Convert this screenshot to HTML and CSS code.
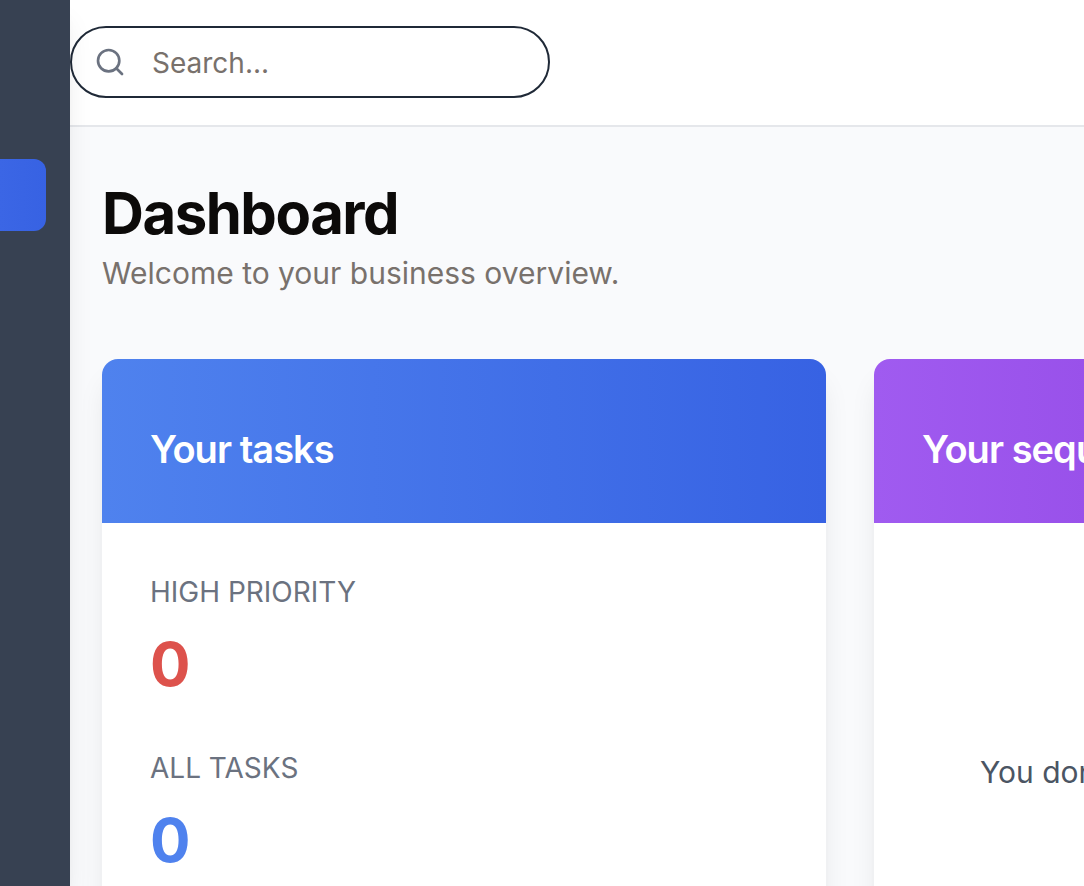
FILE: index.html
```html
<!DOCTYPE html>
<html lang="en">
<head>
<meta charset="utf-8">
<title>Dashboard</title>
<link rel="stylesheet" href="styles.css">
</head>
<body>
<div class="app">
  <nav class="sidebar" aria-label="Main">
    <a class="nav-item" href="#dashboard" aria-label="Dashboard" aria-current="page"></a>
  </nav>
  <div class="main">
    <header class="topbar">
      <label class="search">
        <svg class="search-icon" viewBox="0 0 24 24" aria-hidden="true"><circle cx="11" cy="11" r="8"/><path d="m21 21-4.3-4.3"/></svg>
        <input class="search-input" type="text" placeholder="Search..." aria-label="Search">
      </label>
    </header>
    <main class="content">
      <h1 class="title">Dashboard</h1>
      <p class="subtitle">Welcome to your business overview.</p>
      <div class="cards">
        <section class="card">
          <h2 class="card-head blue">Your tasks</h2>
          <dl class="stats">
            <div class="stat"><dt class="stat-label">HIGH PRIORITY</dt><dd class="stat-value high">0</dd></div>
            <div class="stat"><dt class="stat-label">ALL TASKS</dt><dd class="stat-value all">0</dd></div>
          </dl>
        </section>
        <section class="card">
          <h2 class="card-head purple">Your sequences</h2>
          <p class="empty">You don't have any</p>
        </section>
      </div>
    </main>
  </div>
</div>
</body>
</html>
```
FILE: styles.css
```css
* { box-sizing: border-box; }
body {
  margin: 0;
  font-family: Inter, "Liberation Sans", sans-serif;
  background: #f9fafc;
  overflow: hidden;
}
h1, h2, p, dl, dd { margin: 0; }
.app { display: flex; height: 100vh; }
.sidebar {
  flex: 0 0 70px;
  padding: 159px 24px 0 0;
  background: #374152;
  box-shadow: 0 20px 30px -6px rgba(0, 0, 0, 0.1), 0 8px 12px -8px rgba(0, 0, 0, 0.1);
  z-index: 1;
}
.nav-item {
  display: block;
  height: 72px;
  border-radius: 0 12px 12px 0;
  background: linear-gradient(90deg, #3b66e5, #3762e3);
}
.main { flex: 1; min-width: 0; overflow: hidden; }
.topbar {
  padding: 26px 0 27px;
  background: #fff;
  border-bottom: 2px solid #e5e7eb;
}
.search {
  display: flex;
  align-items: center;
  gap: 26px;
  width: 480px;
  max-width: 100%;
  height: 72px;
  padding: 0 24px 0 22px;
  border: 2px solid #1f2937;
  border-radius: 36px;
  background: #fff;
}
.search-icon {
  flex: none;
  width: 32px;
  height: 32px;
  fill: none;
  stroke: #6b7280;
  stroke-width: 2;
  stroke-linecap: round;
}
.search-input {
  flex: 1;
  min-width: 0;
  padding: 2px 0 0;
  border: 0;
  outline: 0;
  background: transparent;
  font: 28px/40px Inter, "Liberation Sans", sans-serif;
}
.search-input::placeholder { color: #78716c; opacity: 1; }
.content { padding: 50px 32px 0; }
.title {
  color: #0c0a09;
  font-size: 58px;
  line-height: 72px;
  font-weight: 700;
  letter-spacing: -0.025em;
}
.subtitle {
  color: #78716c;
  font-size: 30px;
  line-height: 48px;
}
.cards {
  display: grid;
  grid-template-columns: repeat(2, minmax(724px, 1fr));
  gap: 48px;
  margin-top: 62px;
}
.card {
  min-height: 640px;
  border-radius: 16px;
  background: #fff;
  box-shadow: 0 20px 30px -6px rgba(0, 0, 0, 0.1), 0 8px 12px -8px rgba(0, 0, 0, 0.1);
}
.card-head {
  padding: 66px 48px 50px;
  border-radius: 16px 16px 0 0;
  color: #fff;
  font-size: 38px;
  line-height: 48px;
  font-weight: 600;
  letter-spacing: -0.025em;
}
.blue { background: linear-gradient(90deg, #4f82ee, #3762e3); }
.purple { background: linear-gradient(90deg, #a05bf0, #8839dc); }
.stats { display: grid; gap: 48px; padding: 49px 48px; }
.stat-label {
  color: #6b7280;
  font-size: 28px;
  line-height: 40px;
}
.stat-value {
  margin-top: 16px;
  font-size: 60px;
  line-height: 72px;
  font-weight: 700;
}
.high { color: #dd524c; }
.all { color: #4f82ee; }
.empty {
  padding: 225px 106px 0;
  color: #4b5563;
  font-size: 30px;
  line-height: 48px;
  white-space: nowrap;
}
```
